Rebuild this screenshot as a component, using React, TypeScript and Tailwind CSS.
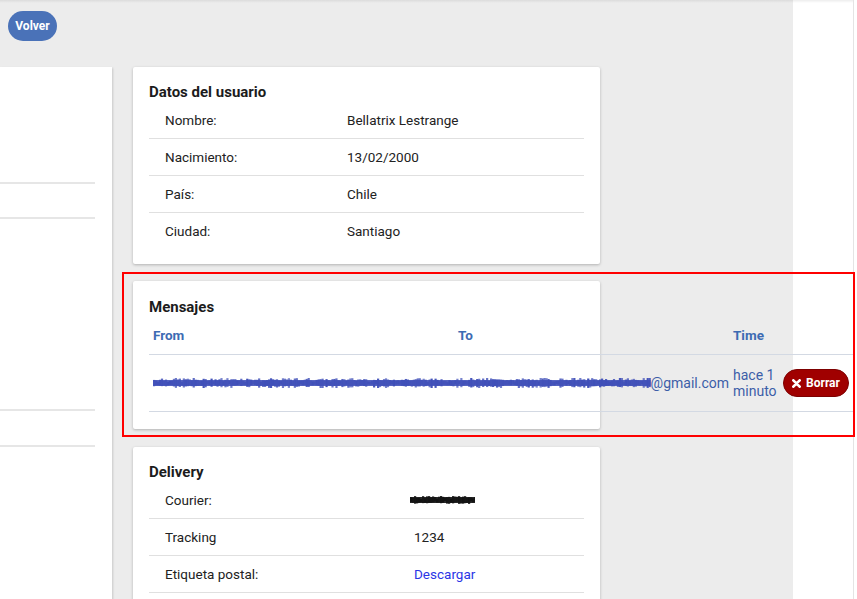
import React from "react";

function seeded(seed: number) {
  let s = seed;
  return () => {
    s = (s * 9301 + 49297) % 233280;
    return s / 233280;
  };
}

function Scribble({ width, height, color, seed }: { width: number; height: number; color: string; seed: number }) {
  const rnd = seeded(seed);
  const marks: React.ReactNode[] = [];
  for (let x = 0; x < width; x += 2) {
    const h = 3 + rnd() * (height - 3);
    const y = (height - h) / 2 + (rnd() - 0.5) * 1.5;
    marks.push(<rect key={x} x={x} y={y} width={2.2} height={h} fill={color} opacity={0.7 + rnd() * 0.3} />);
  }
  return (
    <svg width={width} height={height} viewBox={`0 0 ${width} ${height}`} className="block">
      <rect x="0" y={height / 2 - 3} width={width} height="6" fill={color} opacity="0.9" />
      {marks}
    </svg>
  );
}

const font = { fontFamily: "Roboto, 'Noto Sans', Arial, sans-serif" };

function InfoRow({ label, children, last, col }: { label: string; children: React.ReactNode; last?: boolean; col: string }) {
  return (
    <div className={`grid ${col} h-[37px] items-center ${last ? "" : "border-b border-[#e0e0e0]"}`}>
      <div className="pl-4 text-[13.5px] text-[#222]">{label}</div>
      <div className="text-[13.5px] text-[#222]">{children}</div>
    </div>
  );
}

export default function App() {
  return (
    <div className="relative flex h-[599px] w-[857px] overflow-hidden bg-white" style={font}>
      <div className="pointer-events-none absolute left-0 top-0 z-20 h-[3px] w-[853px] bg-gradient-to-b from-[rgba(0,0,0,0.07)] to-transparent" />
      <div className="flex w-[793px] shrink-0 flex-col bg-[#ececec]">
        <div className="flex pl-2 pt-[11px]">
          <button className="h-[30px] w-[49px] rounded-full bg-[#4a72b8] text-[12px] font-bold text-white">Volver</button>
        </div>
        <div className="mt-[26px] flex gap-[21px]">
          {/* left card */}
          <div className="h-[540px] w-[112px] shrink-0 bg-white shadow-[1px_1px_2px_rgba(0,0,0,0.15)]">
            <div className="mr-[17px]">
              <div className="h-[117px] border-b-2 border-[#e6e6e6]" />
              <div className="h-[35px] border-b-2 border-[#e6e6e6]" />
              <div className="h-[192px] border-b-2 border-[#e6e6e6]" />
              <div className="h-[36px] border-b-2 border-[#e6e6e6]" />
            </div>
          </div>

          {/* middle column */}
          <div className="flex w-[467px] shrink-0 flex-col">
            {/* Datos del usuario */}
            <div className="rounded-[2px] bg-white px-4 pb-[14px] pt-[15px] shadow-[0_1px_3px_rgba(0,0,0,0.25)]">
              <div className="h-5 text-[15px] font-bold leading-5 text-[#1c1c1c]">Datos del usuario</div>
              <InfoRow col="grid-cols-[198px_1fr]" label="Nombre:">Bellatrix Lestrange</InfoRow>
              <InfoRow col="grid-cols-[198px_1fr]" label="Nacimiento:">13/02/2000</InfoRow>
              <InfoRow col="grid-cols-[198px_1fr]" label="País:">Chile</InfoRow>
              <InfoRow col="grid-cols-[198px_1fr]" label="Ciudad:" last>Santiago</InfoRow>
            </div>

            {/* Mensajes */}
            <div className="relative z-10 mt-[17px] h-[148px] rounded-[2px] bg-white px-4 pt-[16px] shadow-[0_1px_3px_rgba(0,0,0,0.25)]">
              <div className="h-5 text-[15px] font-bold leading-5 text-[#1c1c1c]">Mensajes</div>
              <div className="w-[706px]">
                <div className="grid h-[38px] grid-cols-[305px_275px_50px_1fr] items-center border-b border-[#d3d9e3] text-[13.5px] font-bold text-[#3d6bb3]">
                  <div className="pl-1">From</div>
                  <div className="pl-1">To</div>
                  <div className="pl-1">Time</div>
                  <div />
                </div>
                <div className="grid h-[57px] grid-cols-[305px_275px_50px_1fr] items-center border-b border-[#d3d9e3] text-[14px] text-[#3c5ea8]">
                  <div className="col-span-2 flex items-center pl-1">
                    <Scribble width={502} height={10} color="#3f4fb8" seed={7} />
                    <span className="leading-4">@gmail.com</span>
                  </div>
                  <div className="pl-1 leading-4">
                    hace 1
                    <br />
                    minuto
                  </div>
                  <div className="pl-1">
                    <button className="flex h-[28px] w-[66px] items-center justify-center gap-[5px] rounded-full border border-[#7d0000] bg-[#a00000] text-[12px] font-bold text-white">
                      <svg width="9" height="9" viewBox="0 0 10 10">
                        <path d="M1.5 1.5 L8.5 8.5 M8.5 1.5 L1.5 8.5" stroke="white" strokeWidth="3" strokeLinecap="round" />
                      </svg>
                      Borrar
                    </button>
                  </div>
                </div>
              </div>
              <div className="pointer-events-none absolute left-[-11px] top-[-9px] h-[165px] w-[733px] border-2 border-[#ff0000]" />
            </div>

            {/* Delivery */}
            <div className="mt-[18px] rounded-[2px] bg-white px-4 pt-[15px] shadow-[0_1px_3px_rgba(0,0,0,0.25)]">
              <div className="h-5 text-[15px] font-bold leading-5 text-[#1c1c1c]">Delivery</div>
              <InfoRow col="grid-cols-[265px_1fr]" label="Courier:">
                <div className="-ml-1">
                  <Scribble width={65} height={8} color="#111" seed={3} />
                </div>
              </InfoRow>
              <InfoRow col="grid-cols-[265px_1fr]" label="Tracking">1234</InfoRow>
              <InfoRow col="grid-cols-[265px_1fr]" label="Etiqueta postal:">
                <span className="text-[#2b35e6]">Descargar</span>
              </InfoRow>
              <div className="h-[20px]" />
            </div>
          </div>
        </div>
      </div>
      <div className="flex flex-1">
        <div className="w-[60px] bg-white" />
        <div className="w-px bg-[#e4e4e4]" />
        <div className="flex-1 bg-white" />
      </div>
    </div>
  );
}
